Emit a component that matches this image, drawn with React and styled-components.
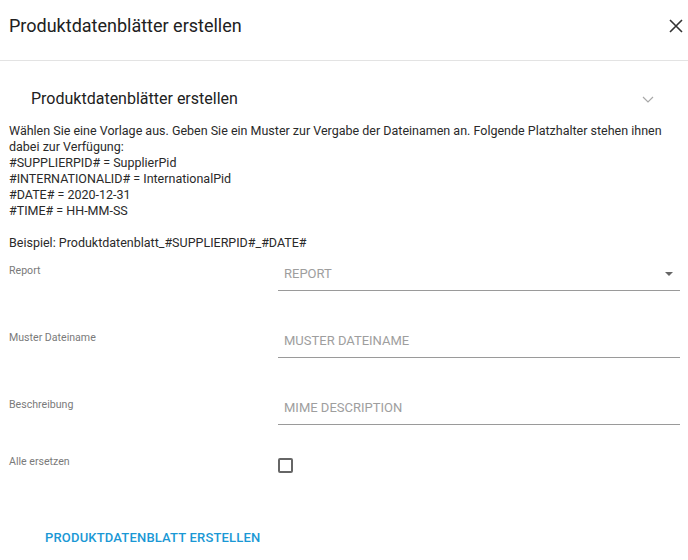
import React from "react";
import styled, { createGlobalStyle } from "styled-components";

const GlobalStyle = createGlobalStyle`
  html, body {
    margin: 0;
    padding: 0;
    background: #fff;
  }
  body {
    font-family: Roboto, "Liberation Sans", sans-serif;
    color: rgba(0, 0, 0, 0.87);
  }
`;

const Dialog = styled.div`
  width: 688px;
  height: 560px;
  background: #fff;
  overflow: hidden;
`;

const Header = styled.div`
  display: flex;
  align-items: center;
  justify-content: space-between;
  height: 52px;
  padding: 0 2px 8px 9px;
  border-bottom: 1px solid #e3e3e3;
`;

const Title = styled.h2`
  margin: 0;
  font-size: 18px;
  font-weight: 400;
  line-height: 24px;
  color: #212121;
`;

const CloseButton = styled.button`
  border: none;
  background: none;
  padding: 0;
  width: 20px;
  height: 20px;
  display: flex;
  align-items: center;
  justify-content: center;
  cursor: pointer;
`;

const Body = styled.div`
  padding: 26px 8px 0 9px;
`;

const SectionHead = styled.div`
  display: flex;
  align-items: center;
  justify-content: space-between;
  padding: 0 26px 0 22px;
  height: 24px;
`;

const SectionTitle = styled.h3`
  margin: 0;
  font-size: 16px;
  font-weight: 400;
  line-height: 24px;
  color: #212121;
`;

const Text = styled.p`
  margin: 12px 0 0;
  font-size: 12.5px;
  line-height: 16px;
  color: #2a2a2a;
  white-space: nowrap;
`;

const Form = styled.div`
  margin-top: 6px;
  display: flex;
  flex-direction: column;
  gap: 33px;
`;

const Row = styled.div`
  display: grid;
  grid-template-columns: 269px 1fr;
  align-items: start;
  margin-top: ${(p) => p.$offset || 0}px;
`;

const Label = styled.label`
  font-size: 10.6px;
  line-height: 14px;
  color: #7a7a7a;
  padding-top: ${(p) => p.$top}px;
`;

const Field = styled.div`
  display: flex;
  align-items: center;
  justify-content: space-between;
  height: 33px;
  padding: 0 7px 0 6px;
  border-bottom: 1px solid #9a9a9a;
  font-size: 13px;
  color: #9e9e9e;
`;

const Check = styled.span`
  display: block;
  width: 11px;
  height: 11px;
  margin-top: 3px;
  border: 2px solid #666;
  border-radius: 2px;
`;

const Action = styled.button`
  margin: 51px 0 0 29px;
  padding: 6px 16px;
  border: none;
  background: none;
  font-family: Roboto, "Liberation Sans", sans-serif;
  font-size: 13px;
  font-weight: 500;
  letter-spacing: 0.18px;
  color: #1a98d5;
  cursor: pointer;
`;

const Chevron = () => (
  <svg width="12" height="7" viewBox="0 0 12 7">
    <path d="M1 1l5 5 5-5" fill="none" stroke="#a8a8a8" strokeWidth="1.2" />
  </svg>
);

const Caret = () => (
  <svg width="8" height="4" viewBox="0 0 8 4">
    <path d="M0 0h8L4 4z" fill="#666" />
  </svg>
);

const fields = [
  { label: "Report", placeholder: "REPORT", select: true },
  { label: "Muster Dateiname", placeholder: "MUSTER DATEINAME" },
  { label: "Beschreibung", placeholder: "MIME DESCRIPTION" },
];

const App = () => (
  <Dialog>
    <GlobalStyle />
    <Header>
      <Title>Produktdatenblätter erstellen</Title>
      <CloseButton aria-label="close">
        <svg width="14" height="14" viewBox="0 0 14 14">
          <path d="M1 1l12 12M13 1L1 13" stroke="#333" strokeWidth="1.6" />
        </svg>
      </CloseButton>
    </Header>
    <Body>
      <SectionHead>
        <SectionTitle>Produktdatenblätter erstellen</SectionTitle>
        <Chevron />
      </SectionHead>
      <Text>
        Wählen Sie eine Vorlage aus. Geben Sie ein Muster zur Vergabe der
        Dateinamen an. Folgende Platzhalter stehen ihnen
        <br />
        dabei zur Verfügung:
        <br />
        #SUPPLIERPID# = SupplierPid
        <br />
        #INTERNATIONALID# = InternationalPid
        <br />
        #DATE# = 2020-12-31
        <br />
        #TIME# = HH-MM-SS
        <br />
        <br />
        Beispiel: Produktdatenblatt_#SUPPLIERPID#_#DATE#
      </Text>
      <Form>
        {fields.map((f) => (
          <Row key={f.label}>
            <Label $top={7}>{f.label}</Label>
            <Field>
              <span>{f.placeholder}</span>
              {f.select && <Caret />}
            </Field>
          </Row>
        ))}
        <Row $offset={-3}>
          <Label $top={0}>Alle ersetzen</Label>
          <Check />
        </Row>
      </Form>
    </Body>
    <Action>PRODUKTDATENBLATT ERSTELLEN</Action>
  </Dialog>
);

export default App;
